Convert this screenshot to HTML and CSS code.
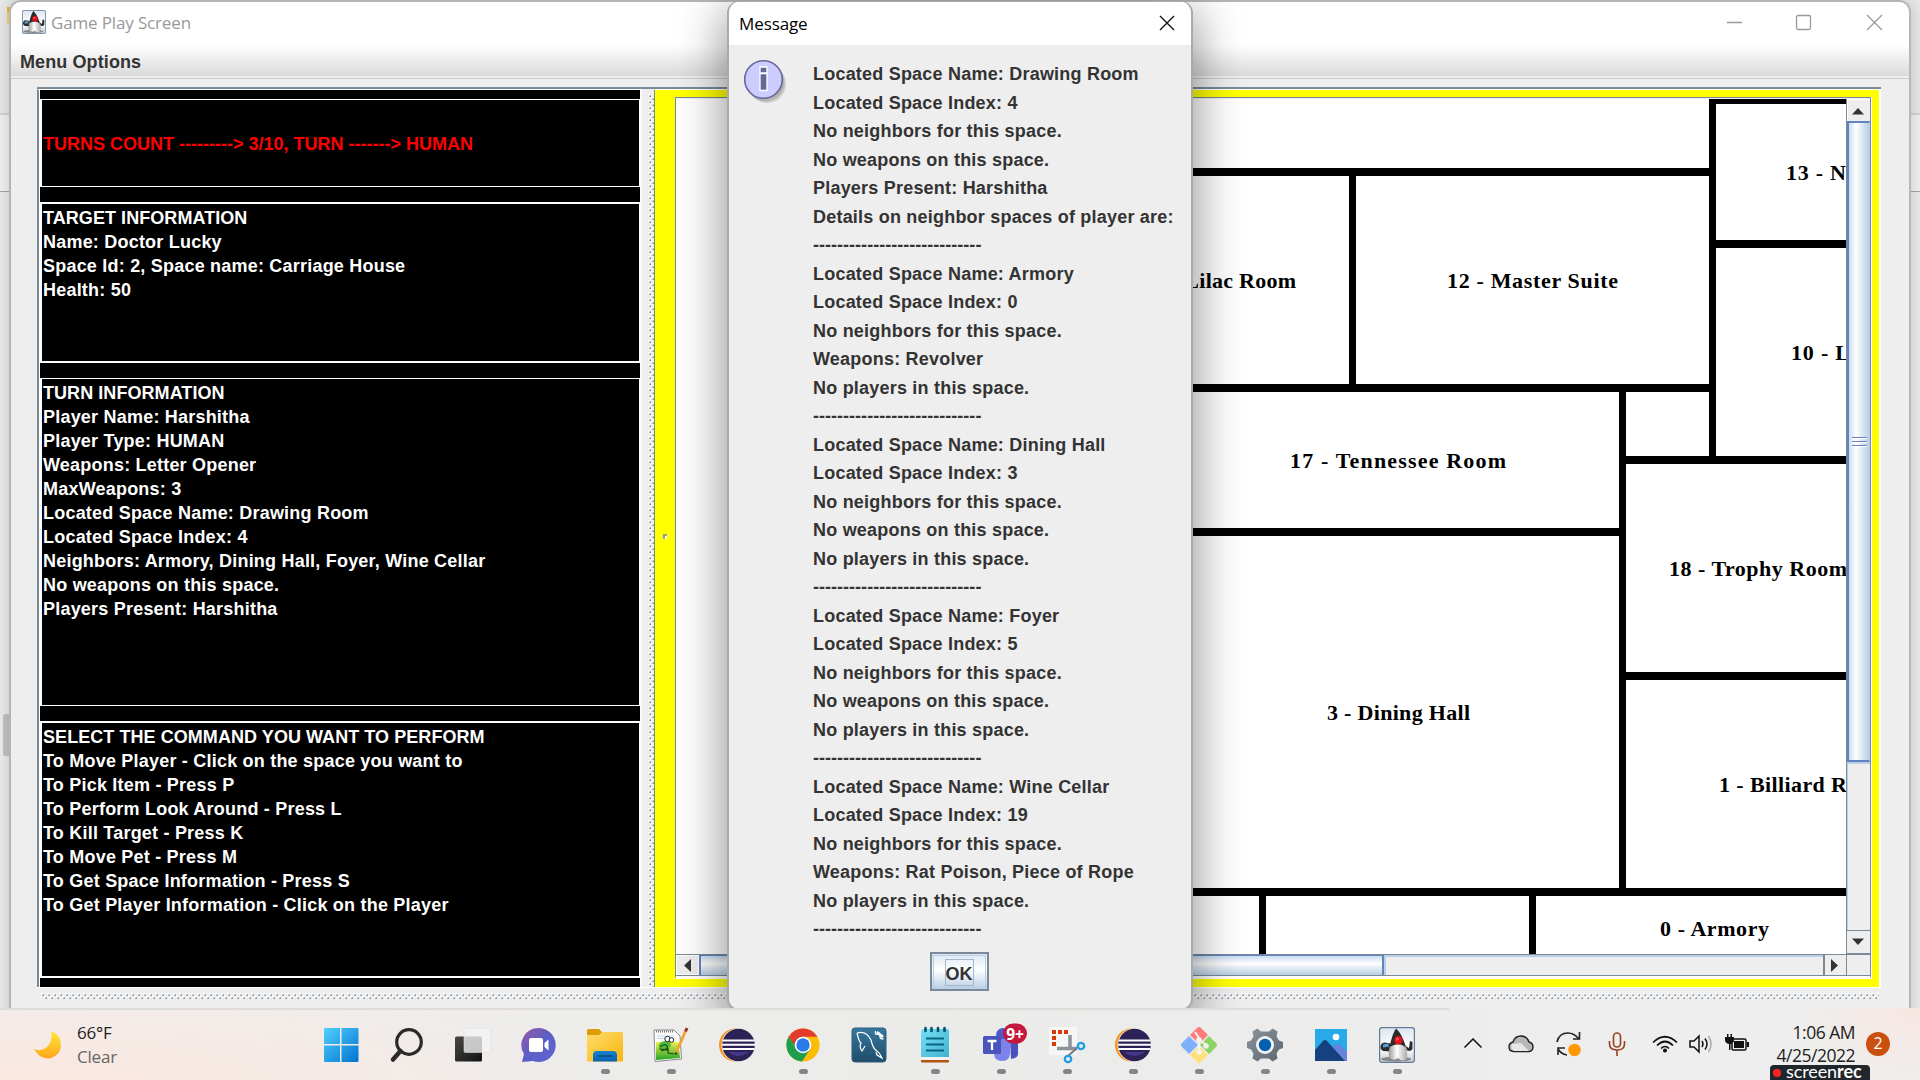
FILE: index.html
```html
<!DOCTYPE html>
<html lang="en">
<head>
<meta charset="utf-8">
<title>Game Play Screen</title>
<link rel="stylesheet" href="styles.css">
</head>
<body>
<svg class="defs" width="0" height="0">
  <defs>
    <pattern id="bumps" width="6" height="6" patternUnits="userSpaceOnUse">
      <rect width="1.5" height="1.5" fill="#fff"/><rect x="3" y="3" width="1.5" height="1.5" fill="#fff"/>
      <rect x="1.5" y="1.5" width="1.5" height="1.5" fill="#7a8a99"/><rect x="4.5" y="4.5" width="1.5" height="1.5" fill="#7a8a99"/>
    </pattern>
    <linearGradient id="gWin" x1="0" y1="0" x2="1" y2="1"><stop offset="0" stop-color="#4fd0fc"/><stop offset="1" stop-color="#0273d2"/></linearGradient>
    <linearGradient id="gDark" x1="0" y1="0" x2="1" y2="1"><stop offset="0" stop-color="#484846"/><stop offset="1" stop-color="#111"/></linearGradient>
    <linearGradient id="gChat" x1="0" y1="0" x2="1" y2="1"><stop offset="0" stop-color="#9a58a5"/><stop offset=".5" stop-color="#5b5fc7"/><stop offset="1" stop-color="#6264d0"/></linearGradient>
    <linearGradient id="gFold" x1="0" y1="0" x2="1" y2="1"><stop offset="0" stop-color="#ffdc6d"/><stop offset="1" stop-color="#f8b60d"/></linearGradient>
    <linearGradient id="gBlue" x1="0" y1="0" x2="0" y2="1"><stop offset="0" stop-color="#1683c9"/><stop offset="1" stop-color="#0862b5"/></linearGradient>
    <linearGradient id="gSql" x1="0" y1="0" x2="0" y2="1"><stop offset="0" stop-color="#38789e"/><stop offset="1" stop-color="#1f4c69"/></linearGradient>
    <linearGradient id="gNote" x1="0" y1="0" x2="1" y2="1"><stop offset="0" stop-color="#73e0f5"/><stop offset="1" stop-color="#43b2d2"/></linearGradient>
    <linearGradient id="gGrass" x1="0" y1="0" x2="0" y2="1"><stop offset="0" stop-color="#f2ee4c"/><stop offset="1" stop-color="#21a429"/></linearGradient>
    <linearGradient id="gGear" x1="0" y1="0" x2="1" y2="1"><stop offset="0" stop-color="#8b959e"/><stop offset="1" stop-color="#5a656f"/></linearGradient>
    <linearGradient id="gMoon" x1="0" y1="0" x2="0" y2="1"><stop offset="0" stop-color="#ffe935"/><stop offset="1" stop-color="#ffa51d"/></linearGradient>
    <linearGradient id="gDuke" x1="0" y1="0" x2="0" y2="1"><stop offset="0" stop-color="#dfe6f2"/><stop offset=".6" stop-color="#fff"/><stop offset="1" stop-color="#c4c8d4"/></linearGradient>
    <linearGradient id="gBelly" x1="0" y1="0" x2="1" y2="0"><stop offset="0" stop-color="#999"/><stop offset=".45" stop-color="#fff"/><stop offset="1" stop-color="#aaa"/></linearGradient>
    <symbol id="duke" viewBox="0 0 36 36">
      <rect x=".6" y=".6" width="34.8" height="34.8" rx="2.5" fill="url(#gDuke)" stroke="#637b96" stroke-width="1.3"/>
      <ellipse cx="17" cy="32" rx="15" ry="2.5" fill="#666" opacity=".7"/>
      <path d="M1.500 20q0-4 4-4.500l6 1v8l-7-.5q-3-1-3-4z" fill="#2c2c2c"/><path d="M4 17.500l5-1 1 3-6 1z" fill="#5aa4d8"/>
      <path d="M25 18l5 3 1-7 2.500 1v7q-2.500 4-7.500 0z" fill="#2c2c2c"/>
      <path d="M12 15q-3 10-2 15 4 5 9 1 5 5 9 0 1-9-3-16z" fill="url(#gBelly)"/>
      <path d="M10.500 20q3-14 6.500-18.500 6 5 10 19-7-6-16.500-.5z" fill="#2b2b2b"/>
      <circle cx="19.500" cy="13.300" r="4.200" fill="#e3101c"/><circle cx="18.500" cy="12" r="1.500" fill="#f56"/>
    </symbol>
    <symbol id="eclipse" viewBox="0 0 36 36">
      <circle cx="16.500" cy="18" r="16.500" fill="#f7941e"/><circle cx="19" cy="18" r="16.500" fill="#fff"/>
      <circle cx="19.500" cy="18" r="16.300" fill="#2c2255"/><path d="M9 25q10 8 21 0z" fill="#463688"/>
      <path d="M3.500 13.500h32M3.200 17.800h32.800M3.500 22h32" stroke="#fff" stroke-width="2"/>
    </symbol>
  </defs>
</svg>

<main class="desktop">
  <div class="back-folder"></div><div class="back-thumb"></div>

  <section class="window">
    <header class="titlebar">
      <svg class="app-icon" width="24" height="24"><use href="#duke"/></svg>
      <span class="title">Game Play Screen</span>
      <svg class="captions" width="160" height="18" viewBox="0 0 160 18" fill="none" stroke="#999" stroke-width="1.3">
        <path d="M1 9.500h15"/><rect x="70.500" y="2.500" width="14" height="14" rx="1.500"/><path d="M141 2l15 15M156 2l-15 15"/>
      </svg>
    </header>
    <nav class="menubar">Menu Options</nav>
    <div class="menu-rule"></div>

    <div class="split">
      <div class="info">
        <div class="box turns">TURNS COUNT ---------&gt; 3/10, TURN -------&gt; HUMAN</div>
        <div class="box target"><span class="heading">TARGET INFORMATION</span><br>Name: Doctor Lucky<br>Space Id: 2, Space name: Carriage House<br>Health: 50</div>
        <div class="box turn"><span class="heading">TURN INFORMATION</span><br>Player Name: Harshitha<br>Player Type: HUMAN<br>Weapons: Letter Opener<br>MaxWeapons: 3<br>Located Space Name: Drawing Room<br>Located Space Index: 4<br>Neighbors: Armory, Dining Hall, Foyer, Wine Cellar<br>No weapons on this space.<br>Players Present: Harshitha</div>
        <div class="box commands"><span class="heading">SELECT THE COMMAND YOU WANT TO PERFORM</span><br>To Move Player - Click on the space you want to<br>To Pick Item - Press P<br>To Perform Look Around - Press L<br>To Kill Target - Press K<br>To Move Pet - Press M<br>To Get Space Information - Press S<br>To Get Player Information - Click on the Player</div>
      </div>
      <div class="divider"><svg width="6" height="894"><rect width="6" height="894" fill="url(#bumps)"/></svg></div>
      <div class="board">
        <div class="grip"></div>
        <div class="scrollpane">
          <svg class="map" width="1170" height="855" viewBox="676 99 1170 855">
            <rect x="676" y="99" width="1170" height="855" fill="#fff"/>
            <path d="M760 168h949v8H760zM1709 99h7v357h-7zM1709 99h137v5h-137zM1716 240h130v8h-130zM1349 176h7v208h-7zM760 384h949v8H760zM1619 392h7v496h-7zM1626 456h220v8h-220zM760 528h859v8H760zM1626 672h220v8h-220zM760 888h1086v8H760zM1259 896h7v58h-7zM1529 896h7v58h-7z"/>
            <g class="rooms">
              <text x="1144" y="288" textLength="152">11 - Lilac Room</text>
              <text x="1447" y="288" textLength="171">12 - Master Suite</text>
              <text x="1290" y="468" textLength="216">17 - Tennessee Room</text>
              <text x="1327" y="720" textLength="143">3 - Dining Hall</text>
              <text x="1786" y="180" textLength="60">13 - N</text>
              <text x="1791" y="360" textLength="59">10 - L</text>
              <text x="1669" y="576" textLength="178">18 - Trophy Room</text>
              <text x="1719" y="792" textLength="128">1 - Billiard R</text>
              <text x="1660" y="936" textLength="109">0 - Armory</text>
            </g>
          </svg>
          <div class="vbar">
            <div class="arrow up"><svg width="12" height="8"><path d="M0 7.500L6 1l6 6.500z" fill="#333"/></svg></div>
            <div class="vthumb"><i></i><i></i><i></i></div>
            <div class="vtrack"></div>
            <div class="arrow down"><svg width="12" height="8"><path d="M0 .5h12L6 7z" fill="#333"/></svg></div>
          </div>
          <div class="hbar">
            <div class="arrow left"><svg width="7" height="13"><path d="M7 0v13L0 6.500z" fill="#333"/></svg></div>
            <div class="hthumb"></div>
            <div class="htrack"></div>
            <div class="arrow right"><svg width="7" height="13"><path d="M0 0v13l7-6.500z" fill="#333"/></svg></div>
          </div>
          <div class="corner"></div>
        </div>
      </div>
    </div>
    <svg class="bottom-bumps" width="1838" height="6"><rect width="1838" height="6" fill="url(#bumps)"/></svg>
  </section>

  <section class="dialog">
    <header class="dialog-title"><span>Message</span>
      <svg width="16" height="16" stroke="#111" stroke-width="1.400"><path d="M1 1l14 14M15 1L1 15"/></svg>
    </header>
    <div class="dialog-body">
      <svg class="info-icon" width="46" height="50" viewBox="0 0 46 50">
        <circle cx="24" cy="25" r="19" fill="#999" opacity=".35"/><circle cx="22.500" cy="23.500" r="19" fill="#888" opacity=".4"/>
        <circle cx="20.500" cy="20.500" r="18.800" fill="#ccf" stroke="#669" stroke-width="1.600"/>
        <path d="M17 8h7v6h-7zM17 14.500h7v17h-7z" fill="#669" stroke="#fff" stroke-width="1.300"/>
      </svg>
      <div class="message">Located Space Name: Drawing Room<br>Located Space Index: 4<br>No neighbors for this space.<br>No weapons on this space.<br>Players Present: Harshitha<br>Details on neighbor spaces of player are:<br><span class="rule">----------------------------</span><br>Located Space Name: Armory<br>Located Space Index: 0<br>No neighbors for this space.<br>Weapons: Revolver<br>No players in this space.<br><span class="rule">----------------------------</span><br>Located Space Name: Dining Hall<br>Located Space Index: 3<br>No neighbors for this space.<br>No weapons on this space.<br>No players in this space.<br><span class="rule">----------------------------</span><br>Located Space Name: Foyer<br>Located Space Index: 5<br>No neighbors for this space.<br>No weapons on this space.<br>No players in this space.<br><span class="rule">----------------------------</span><br>Located Space Name: Wine Cellar<br>Located Space Index: 19<br>No neighbors for this space.<br>Weapons: Rat Poison, Piece of Rope<br>No players in this space.<br><span class="rule">----------------------------</span></div>
    </div>
    <button class="ok"><span>OK</span></button>
  </section>
</main>

<footer class="taskbar">
  <div class="weather">
    <svg width="30" height="30" viewBox="0 0 30 30"><path d="M18 1q10 4 10 14T17 28.500Q6 29 1 19q7 3 13-2 6-6 4-16z" fill="url(#gMoon)"/></svg>
    <div class="lines"><span>66°F</span><span class="sub">Clear</span></div>
  </div>
  <div class="apps">
    <div class="app"><svg viewBox="0 0 36 36"><path d="M1 2q0-1 1-1h15v16H1zM18.500 1H34q1.500 0 1.500 1v15h-17zM1 18.500h16V35H2q-1 0-1-1zM18.500 18.500h17V34q0 1-1.500 1H18.500z" fill="url(#gWin)"/></svg></div>
    <div class="app"><svg viewBox="0 0 36 36" fill="none" stroke="#2a2a2a"><circle cx="20" cy="15" r="12.300" stroke-width="3.200"/><path d="M11.500 24L4 32.500" stroke-width="4.500" stroke-linecap="round"/></svg></div>
    <div class="app"><svg viewBox="0 0 36 36"><rect y="9.500" width="27" height="25" rx="1.500" fill="url(#gDark)"/><rect x="9" y="1" width="27" height="24.500" rx="1.500" fill="#f4f4f4" fill-opacity=".78" stroke="#ddd" stroke-width=".6"/></svg></div>
    <div class="app"><svg viewBox="0 0 36 36"><path d="M18 1a17 17 0 1 1-6 33l-11 1 2-8A17 17 0 0 1 18 1z" fill="url(#gChat)"/><rect x="8" y="11" width="14" height="14" rx="2" fill="#fff"/><path d="M23.500 16l4-3.500v11l-4-3.500z" fill="#fff"/></svg></div>
    <div class="app run"><svg viewBox="0 0 36 36"><path d="M0 3.500Q0 2 1.500 2H12l4 4-4 4H0z" fill="#dd9c05"/><path d="M0 8h12l3-3h19.500Q36 5 36 6.500v28H0z" fill="url(#gFold)"/><path d="M6 34.500V28q0-4 4-4h16q4 0 4 4v6.500z" fill="url(#gBlue)"/><path d="M11 29h14" stroke="#0a4a86" stroke-width="1.500" stroke-linecap="round"/></svg></div>
    <div class="app run"><svg viewBox="0 0 36 36"><path d="M1 3h20l6 6 1.500 23-26.500 2.500z" fill="#fcfcfc" stroke="#888"/><path d="M3 4.500h17" stroke="#777" stroke-width="2" stroke-dasharray="1 1"/><path d="M4 9h17M4 11.500h17" stroke="#b9d7ee"/><path d="M3 15h22.500l1.500 16-24 2z" fill="url(#gGrass)"/><path d="M6 17q4-5 11-2l1 4q-4 5-8 4-5-1-4-6z" fill="#4fbb3c"/><path d="M7 20q5-4 7-1t-6 5M6 22l10 1M15 21v5l6 1" fill="none" stroke="#174d16" stroke-width="1.200"/><circle cx="14.500" cy="12" r="2.700" fill="#fff" stroke="#222"/><circle cx="18.500" cy="13" r="2.300" fill="#fff" stroke="#222"/><path d="M23 26L33.500 2" stroke="#f0a42c" stroke-width="2.600"/><path d="M32.500 4.500l1.500-3.500" stroke="#933" stroke-width="3"/><path d="M22.500 27.500l.8-2" stroke="#222" stroke-width="2"/></svg></div>
    <div class="app"><svg><use href="#eclipse"/></svg></div>
    <div class="app run"><svg viewBox="0 0 36 36"><circle cx="18" cy="18" r="16.600" fill="#fbbc05"/><path d="M3.600 9.700A16.600 16.600 0 0 0 17 34.600L25.200 22 18 18 10.800 22z" fill="#1e9d4c"/><path d="M3.600 9.700L10.800 22 18 9.700z" fill="#1e9d4c"/><path d="M3.600 9.700Q9 1.400 18 1.400T32.400 9.700H18q-7 0-8.500 8z" fill="#e33b2e"/><circle cx="18" cy="18" r="8.300" fill="#fff"/><circle cx="18" cy="18" r="6.700" fill="#2a7ae9"/></svg></div>
    <div class="app"><svg viewBox="0 0 36 36"><rect x="1" y="1" width="34" height="34" rx="3" fill="url(#gSql)" stroke="#2b5f80"/><path d="M6 6q9-3 14 7 2 9 6 11 3 2 5 7l-5-3-1-3M6 6q2 9 4 10-2 4 1 8l3-5" fill="none" stroke="#fff" stroke-width="1.200"/><path d="M26 5l6 5" stroke="#fff" stroke-width="2.500"/><path d="M24.500 4v3l4 .5 1 4 3 .5" stroke="#fff" stroke-width="1.300" fill="none"/></svg></div>
    <div class="app run"><svg viewBox="0 0 36 36"><path d="M4 33h28v1.500q0 1-1 1H5q-1 0-1-1z" fill="#b35410"/><path d="M4 30h28v3H4z" fill="#f3f3f3"/><path d="M4 4q0-2 2-2h24q2 0 2 2v26H4z" fill="url(#gNote)"/><path d="M9 11.500h18M9 17.500h18M9 23.500h18" stroke="#096580" stroke-width="1.800"/><path d="M8.500 1v3M14.500 1v3M21 1v3M27.500 1v3" stroke="#07506b" stroke-width="2.600" stroke-linecap="round"/></svg></div>
    <div class="app run"><svg class="wide" viewBox="0 0 48 44"><circle cx="22" cy="13" r="7" fill="#5059c9"/><path d="M29 17h8v15q0 4-7 5z" fill="#4a53bd"/><path d="M13 17h16v14q0 8-8 8t-8-8z" fill="#7b83eb"/><rect x="2" y="14" width="18" height="18" rx="1.500" fill="#4b53bc"/><path d="M6.500 19h9M11 19v9" stroke="#fff" stroke-width="2.300"/><rect x="22" y="1.500" width="24" height="20" rx="10" fill="#c4183c"/><text x="34" y="17.500" text-anchor="middle" class="badge-text">9+</text></svg></div>
    <div class="app run"><svg viewBox="0 0 36 36"><rect width="28" height="28" rx="2" fill="#f6f6f6"/><path d="M5 19V5h15" fill="none" stroke="#d83b01" stroke-width="4" stroke-dasharray="4 2"/><path d="M21 8v14M8 21.500h20" stroke="#8b9299" stroke-width="3.500"/><path d="M28 21l-9 8" stroke="#777" stroke-width="2"/><circle cx="32" cy="19" r="3.200" fill="none" stroke="#1f9de4" stroke-width="2.300"/><circle cx="19" cy="32" r="3.200" fill="none" stroke="#1f9de4" stroke-width="2.300"/></svg></div>
    <div class="app run"><svg><use href="#eclipse"/></svg></div>
    <div class="app run"><svg viewBox="0 0 36 36"><path d="M18 0q1 0 2 1l7 7-9 9-9-9 7-7q1-1 2-1z" fill="#ff7b7b"/><path d="M28 9l7 7q2 2 0 4l-7 7-9-9z" fill="#8cd35f"/><path d="M8 9l9 9-9 9-7-7q-2-2 0-4z" fill="#7eb0fb"/><path d="M18 19l9 9-7 7q-2 2-4 0l-7-7z" fill="#ffe07b"/><path d="M14 5l4 6v14M18 12l7 6" fill="none" stroke="#f2f2f0" stroke-width="2"/><circle cx="18" cy="13" r="2.800" fill="#f2f2f0"/><circle cx="25" cy="19" r="2.800" fill="#f2f2f0"/><circle cx="18" cy="25" r="2.800" fill="#f2f2f0"/></svg></div>
    <div class="app run"><svg viewBox="0 0 36 36"><path d="M10.500 1.500L14 4.500h8l3.500-3 5 3-1 5 2.500 4 4 1.500v6l-4 1.500-2.500 4 1 5-5 3-3.500-3h-8l-3.500 3-5-3 1-5-2.500-4-4-1.500v-6l4-1.500 2.500-4-1-5z" fill="url(#gGear)"/><circle cx="18" cy="18" r="9" fill="#f3f3f3"/><circle cx="18" cy="18" r="6.200" fill="#075fb0"/></svg></div>
    <div class="app run"><svg viewBox="0 0 36 36"><path d="M2 2h32v32H2z" fill="#28a9e8"/><path d="M20 20l3-3q2-1 4 1l7 7v9H20z" fill="#6a82dc"/><path d="M2 23l8-9q2-2 4 0l18 20H2z" fill="#15427e"/><circle cx="23" cy="10" r="3.300" fill="#fff"/></svg></div>
    <div class="app run"><svg><use href="#duke"/></svg></div>
  </div>
  <div class="tray">
    <svg class="t-chev" width="18" height="10" fill="none" stroke="#111" stroke-width="1.500"><path d="M.5 9.500L9 1l8.500 8.500"/></svg>
    <svg class="t-cloud" width="26" height="18"><path d="M6 16.500q-5 0-5-4.500 0-4 4-5 2-6 8-6t8 6q4 1 4 5t-4 4.500z" fill="#b8b8b8" stroke="#222" stroke-width="1.400"/><path d="M4 9l9-1 8 8H6q-4-2-2-7z" fill="#e6e6e6"/></svg>
    <svg class="t-sync" width="26" height="26" fill="none" stroke="#222" stroke-width="1.600"><path d="M1 11Q3 2 12 2q6 0 11 6M23.500 1v7H17M2 24v-7h7M2 18q3 5 9 6"/><circle cx="18.500" cy="19" r="6.200" fill="#ff9800" stroke="none"/></svg>
    <svg class="t-mic" width="18" height="24" fill="none" stroke="#97421f" stroke-width="1.600"><rect x="5.500" y="1" width="7" height="14" rx="3.500"/><path d="M1.500 9v3q0 6 7.500 6t7.500-6V9M9 18v6"/></svg>
    <svg class="t-wifi" width="26" height="18" fill="none" stroke="#111" stroke-width="1.700"><path d="M1 7.500Q13-4 25 7.500M5 10.500q8-8 16 0M9 13.500q4-4 8 0"/><circle cx="13" cy="15.500" r="1.200" fill="#111"/></svg>
    <svg class="t-vol" width="24" height="20" fill="none" stroke="#111" stroke-width="1.500"><path d="M1 7h4l5-5v16l-5-5H1zM13 7q2 3 0 6M16 4.500q4 5.500 0 11"/><path d="M19.500 2q5 8 0 16" stroke="#aaa"/></svg>
    <svg class="t-bat" width="25" height="19"><rect x="7" y="6" width="14" height="11" rx="1.500" fill="none" stroke="#111" stroke-width="1.500"/><rect x="9" y="8" width="10" height="7" fill="#111"/><path d="M22 9h2v5h-2zM0 4h9v3q0 3-3.500 4v6H4v-6Q0 10 0 7zM2 1h1.500v3H2zM5.500 1H7v3H5.500z" fill="#111"/></svg>
    <div class="clock"><span>1:06 AM</span><span>4/25/2022</span></div>
    <div class="count">2</div>
  </div>
  <div class="screenrec"><i></i><span>screen<b>rec</b></span></div>
</footer>
</body>
</html>
```
FILE: styles.css
```css
* { box-sizing: border-box; }
body { margin: 0; width: 1920px; height: 1080px; overflow: hidden; display: flex; flex-direction: column; font-family: "Liberation Sans", Arial, sans-serif; }
.defs { position: absolute; }
svg { display: block; flex: none; }

.desktop { position: relative; flex: none; height: 1008px; overflow: hidden; padding-left: 9px;
  background: linear-gradient(#e8e8e8 0 113px, #d2d2d2 113px 115px, #f1f1f1 115px 191px, #a5a5a5 191px 192px, #ececec 192px); }
.back-folder { position: absolute; left: 7px; top: 7px; width: 12px; height: 17px; background: #f6d271; border-top: 5px solid #efb62c; }
.back-thumb { position: absolute; left: 3px; top: 714px; width: 12px; height: 42px; background: #c4c4c4; border-radius: 2px; }

.window { position: relative; width: 1902px; height: 1024px; border: 2px solid #b5b5b5; border-right-color: #b8b8b8; border-radius: 12px; overflow: hidden; background: #eee; box-shadow: 0 0 16px rgba(0,0,0,.18); }
.titlebar { height: 43px; background: #fff; display: flex; align-items: center; padding: 0 23px 3px 11px; }
.title { font-family: "Open Sans", "Noto Sans", sans-serif; font-size: 17px; letter-spacing: -.15px; color: #999; margin-left: 5px; padding-top: 1px; }
.captions { margin-left: auto; }
.menubar { height: 31px; line-height: 35px; padding-left: 9px; background: linear-gradient(#fff, #dadada); font-weight: bold; font-size: 18px; letter-spacing: .1px; color: #333; }
.menu-rule { height: 11px; background: linear-gradient(#eee 0 2px, #ccc 2px 3px, #eee 3px); }

.split { display: flex; width: 1844px; height: 901px; margin-left: 26px; border-top: 2px solid #7a8a99; border-bottom: 1px solid #fff; }
.info { width: 603px; border-left: 2px solid #7a8a99; border-top: 1px solid #fff; background: #000; display: flex; flex-direction: column; padding: 9px 0 9px 1px; box-shadow: inset 1px 0 #fff; color: #fff; font-weight: bold; font-size: 18px; line-height: 24px; letter-spacing: .21px; }
.box { border: 1px solid #fff; border-left-width: 2px; white-space: nowrap; flex: none; }
.heading { letter-spacing: .06px; }
.turns { height: 88px; line-height: 88px; color: #f00; padding-left: 1px; letter-spacing: 0; }
.target { height: 161px; margin-top: 15px; border-top-width: 2px; border-bottom-width: 2px; padding: 2px 0 0 1px; }
.turn { height: 328px; margin-top: 15px; padding: 2px 0 0 1px; }
.commands { height: 257px; margin-top: 15px; border-top-width: 2px; border-bottom-width: 2px; padding: 2px 0 0 1px; }
.divider { width: 14px; padding: 5px 0 0 6px; border-left: 2px solid #fafafa; background: #eee; overflow: hidden; }
.board { position: relative; width: 1227px; border: solid #fff; border-width: 1px 2px 0 1px; border-left-color: #7a8a99; background: #ff0; padding: 7px 8px 8px 20px; }
.grip { position: absolute; left: 8px; top: 444px; width: 4px; height: 5px; background: #fff; border-top: 2px solid #999; border-left: 2px solid #999; }

.scrollpane { display: grid; grid-template-columns: 1170px 24px; grid-template-rows: 855px 22px; width: 1196px; height: 882px; border: 1px solid #7a8a99; border-width: 1px 1px 3px 1px; border-bottom-color: #fff; padding-top: 1px; background: #eee; box-shadow: 1px 0 #fff; }
.rooms { font: bold 22px "Liberation Serif", "Times New Roman", serif; }
.arrow { display: flex; align-items: center; justify-content: center; background: #eee; flex: none; }
.vbar { display: flex; flex-direction: column; border-left: 1px solid #7a8a99; }
.up { height: 22px; border-top: 1px solid #fff; border-left: 1px solid #fff; padding-right: 3px; }
.vthumb { height: 641px; border: 2px solid #6382bf; border-right: 1px solid #b8cfe5; background: linear-gradient(90deg, #c8ddf2, #fff 35%, #b8cfe5); display: flex; flex-direction: column; align-items: center; justify-content: center; gap: 3px; }
.vthumb i { width: 15px; height: 1px; background: #6382bf; box-shadow: 0 1px #fff; }
.vtrack { flex: 1; background: #eee; border-left: 1px solid #b8cfe5; border-top: 2px solid #b8cfe5; }
.down { height: 24px; border: 1px solid #7a8a99; border-width: 1px 0; padding-right: 2px; }
.hbar { display: flex; border: solid #7a8a99; border-width: 1px 0; }
.left { width: 23px; border: 1px solid #fff; padding-right: 1px; }
.hthumb { width: 685px; border: 1px solid #6382bf; border-width: 1px 2px 0; background: linear-gradient(#c8ddf2, #fff 40%, #b8cfe5); }
.htrack { flex: 1; border-top: 2px solid #b8cfe5; border-left: 2px solid #b8cfe5; }
.right { width: 23px; border-left: 2px solid #7a8a99; padding-right: 2px; }
.corner { border: 1px solid #7a8a99; border-right: 0; }
.bottom-bumps { margin: 5px 0 0 30px; }

.dialog { position: absolute; left: 727px; top: 1px; width: 466px; height: 1010px; border: 2px solid #aaa; border-top-width: 1px; border-radius: 12px; overflow: hidden; background: #eee; box-shadow: 0 14px 46px 6px rgba(0,0,0,.38); display: flex; flex-direction: column; }
.dialog-title { height: 43px; flex: none; background: #fff; display: flex; align-items: center; justify-content: space-between; padding: 0 16px 1px 10px; font: 17px "Open Sans", "Noto Sans", sans-serif; letter-spacing: -.1px; color: #000; }
.dialog-body { display: flex; flex: none; height: 907px; padding: 14px 0 0 14px; }
.message { font-weight: bold; font-size: 18px; line-height: 28.500px; letter-spacing: .21px; color: #333; margin: 1px 0 0 24px; white-space: nowrap; }
.rule { letter-spacing: .02px; }
.ok { align-self: center; position: relative; left: -1px; width: 59px; height: 39px; flex: none; padding: 2px 0 0; border: 2px solid #7a8a99; outline: 1px solid #b8cfe5; outline-offset: -4px; border-radius: 0; background: linear-gradient(#dce8f4, #fff 45%, #b8cfe5); display: flex; align-items: center; justify-content: center; font: bold 18px "Liberation Sans", Arial, sans-serif; color: #333; }
.ok span { border: 1px solid #a3b8cc; width: 29px; height: 27px; line-height: 28px; text-align: center; }

.taskbar { position: relative; flex: none; height: 72px; display: flex; overflow: hidden; background: radial-gradient(ellipse 560px 110px at 40px 75px, #fae7df, rgba(250,231,223,0)), radial-gradient(ellipse 130px 90px at 1920px 0, #f7e6e2, rgba(247,230,226,0)), linear-gradient(90deg, #f1efee, #ebebea 50%, #eeefee); font-family: "Open Sans", "Noto Sans", sans-serif; color: #222; }
.taskbar::before { content: ""; position: absolute; left: 0; top: 0; width: 1449px; height: 2px; background: #dedcdb; }
.weather { width: 308px; display: flex; padding: 22px 0 0 33px; }
.lines { margin: -9px 0 0 14px; display: flex; flex-direction: column; font-size: 17px; line-height: 24px; letter-spacing: -.2px; }
.sub { color: #666; }
.apps { display: flex; }
.app { width: 66px; display: flex; flex-direction: column; align-items: center; padding-top: 19px; }
.app svg { width: 36px; height: 36px; overflow: visible; }
.app svg.wide { width: 48px; height: 44px; margin: -5px -6px -3px 2px; }
.badge-text { font: bold 15.500px "Open Sans", sans-serif; fill: #fff; }
.run::after { content: ""; width: 9px; height: 5px; border-radius: 3px; background: #858585; margin-top: 6px; }
.tray { display: flex; align-items: flex-start; }
.t-chev { margin: 30px 0 0 34px; }
.t-cloud { margin: 27px 0 0 26px; }
.t-sync { margin: 23px 0 0 22px; }
.t-mic { margin: 24px 0 0 26px; }
.t-wifi { margin: 27px 0 0 26px; }
.t-vol { margin: 26px 0 0 11px; }
.t-bat { margin: 25px 0 0 12px; }
.clock { width: 105px; margin-top: 13px; display: flex; flex-direction: column; align-items: flex-end; font-size: 17.500px; line-height: 23px; letter-spacing: -.5px; }
.count { width: 24px; height: 24px; margin: 24px 0 0 11px; border-radius: 50%; background: #ca5010; color: #fff; font-size: 16px; line-height: 23px; text-align: center; }
.screenrec { position: absolute; left: 1770px; top: 57px; width: 100px; height: 15px; background: #20262b; border-radius: 4px 4px 0 0; color: #fff; display: flex; align-items: center; gap: 5px; padding-left: 3px; font: 18px/15px Lato, sans-serif; letter-spacing: -.1px; white-space: nowrap; }
.screenrec i { width: 8px; height: 8px; border-radius: 50%; background: #f22; flex: none; }
.screenrec span { position: relative; top: -1px; }
```
